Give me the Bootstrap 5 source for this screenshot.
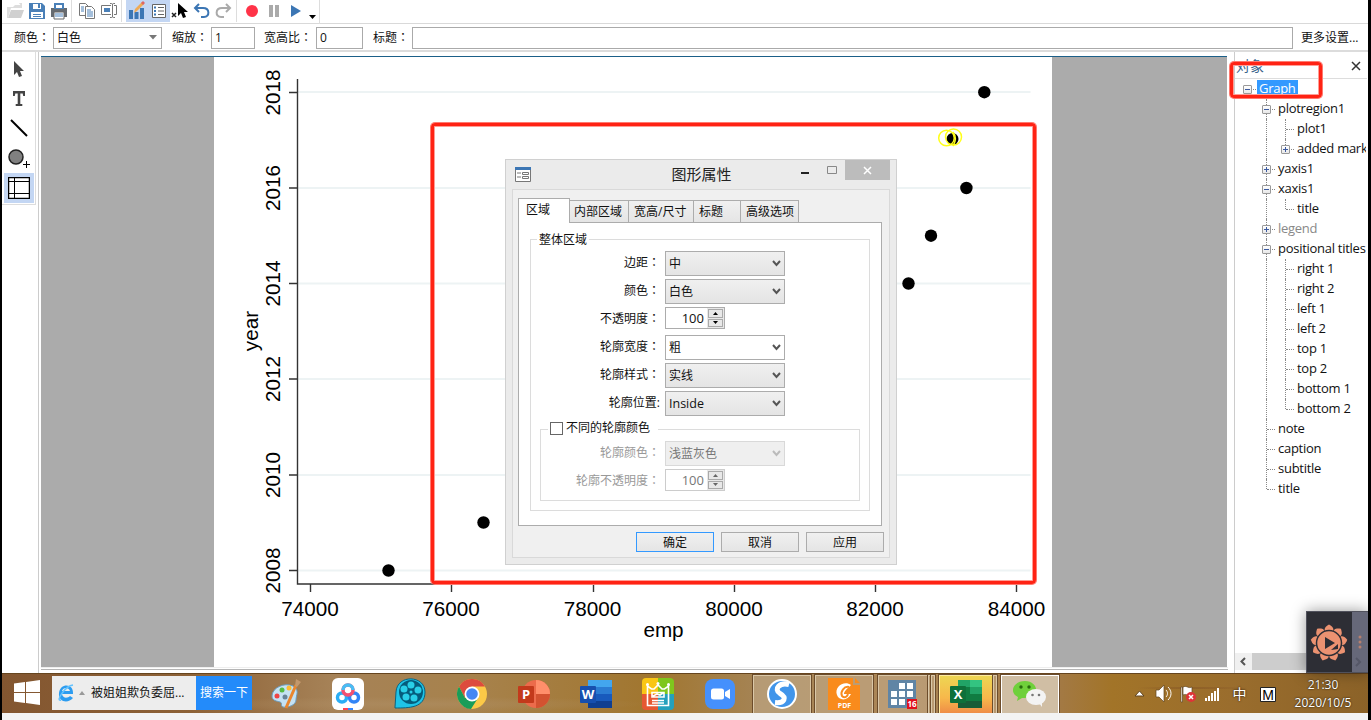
<!DOCTYPE html>
<html lang="zh-CN">
<head>
<meta charset="utf-8">
<title>图形编辑器</title>
<link href="https://cdn.jsdelivr.net/npm/bootstrap@5.3.0/dist/css/bootstrap.min.css" rel="stylesheet">
<style>
body{width:1371px;height:720px;overflow:hidden;background:#fff;color:#111;font:12px/16px "Open Sans","Noto Sans CJK SC",sans-serif}
svg{display:block;flex:none}
.co{font-family:"Noto Sans CJK TC",sans-serif;line-height:1}
.frame{height:720px;border-left:2px solid #000;border-right:3px solid #000}
.bar1{height:24px;padding-left:2px;border-bottom:1px solid #d9d9d9}
.bar1 .tools{height:24px;border-right:1px solid #ddd}
.tb{width:22px;height:22px;display:flex;align-items:center;justify-content:center}
.on{background:#c3d6f3}
.vsep{width:1px;height:22px;background:#ddd}
.bar2{height:28px;border-bottom:2px solid #dcdcdc;padding:1px 10px 0 12px;white-space:nowrap}
.bar2 .inp{height:22px;border:1px solid #aaa;padding:2px 3px;background:#fff}
.main-area{height:621px}
.side{width:34px;height:153px;border-right:1px solid #ddd;border-bottom:1px solid #ddd;padding-top:1px}
.side div{height:30px;width:30px;margin-left:2px;display:flex;align-items:center;justify-content:center}
.work{width:1190px;margin-left:2px;border-left:1px solid #ccc;padding:4px 0 0 2px}
.stage{width:1186px;height:611px;background:#ababab;border-top:1px solid #1b5f88;padding-left:173px}
.workfoot{height:3px;border-top:1px solid #eee;border-bottom:1px solid #b5b5b5}
.objs{width:133px;margin-left:6px;border-left:1px solid #ccc;overflow:hidden}
.objs .hd{height:27px;border-bottom:1px solid #ddd;padding:6px 5px 0 1px;color:#39648c;font-size:14px}
.tree{height:574px;width:131px;overflow:hidden;font-size:13px;padding-left:3px}
.trow{height:20px;display:flex;white-space:nowrap;color:#111}
.g{width:19px;flex:none;position:relative}
.g.v:before,.g.l:before{content:"";position:absolute;left:9px;top:0;height:20px;border-left:1px dotted #888}
.g.l:before{height:10px}
.g.h:after{content:"";position:absolute;left:10px;top:10px;width:8px;border-top:1px dotted #888}
.g b{position:absolute;z-index:1;left:5px;top:6px;width:9px;height:9px;border:1px solid #999;background:linear-gradient(#fff,#e8e8e8);border-radius:1px}
.g b:before{content:"";position:absolute;left:1px;top:3px;width:5px;height:1px;background:#3c5aa0}
.g b.p:after{content:"";position:absolute;left:3px;top:1px;width:1px;height:5px;background:#3c5aa0}
.trow span{padding:0 0 0 2px;letter-spacing:-.27px;line-height:18px}
.trow .sel{background:#3399ff;color:#fff;height:18px;margin-top:1px;line-height:17px;padding-right:2px}
.hs{height:17px;background:#f0f0f0}
.hs .th{width:81px;background:#cdcdcd}
.taskbar{height:40px;background:radial-gradient(ellipse at 410px 30px,#b0906688,#0000 240px),radial-gradient(ellipse at 1190px 14px,#7f4f2399 10px,#0000 60px),linear-gradient(90deg,#835630 0,#8d6237 190px,#a68257 330px,#a7824c 470px,#a1762f 650px,#a58456 760px,#ab8656 880px,#a37a48 1050px,#a27428 1110px,#9a6d2d 1230px,#8b6228 1369px);border-top:1px solid #66451f}
.slot{width:62px;height:40px;display:flex;align-items:center;justify-content:center;flex:none}
.run{width:58px;height:39px;border:1px solid #dac8a8;outline:1px solid #6c4c2b;background:#ffffff30;display:flex;align-items:center;justify-content:center}
.search{width:144px;height:34px;margin:2px 0 0 25px;background:#ededed;white-space:nowrap;line-height:34px}
.go{width:56px;background:#238bfa;color:#fff;text-align:center}
.tray{color:#fff;line-height:18px;text-shadow:0 0 2px #000}
.foot{height:7px;background:#f3f3f3}
.note{position:absolute;border:3px solid #ff2314;border-radius:4px;box-shadow:0 0 0 1px #ff7a70,inset 0 0 0 1px #ff9d95}
.dlg{position:absolute;left:505px;top:159px;width:392px;height:406px;background:#ebebeb;border:1px solid #d0d0d0;padding:0 6px}
.dlg .tt{height:29px;font-size:15px;color:#222}
.dlg .cl{width:45px;height:20px;background:#bcbcbc}
.pan{height:369px;border:1px solid #d9d9d9;background:#f0f0f0;padding:8px 5px 0 5px}
.tabz{height:25px;position:relative;z-index:1;margin-bottom:-1px}
.tabz div{height:23px;border:1px solid #acacac;background:linear-gradient(#f0f0f0,#e5e5e5);padding:3px 0 0 5px;margin-right:-1px;white-space:nowrap}
.tabz .act{height:25px;background:#fff;border-bottom:0;padding:3px 0 0 7px;z-index:1}
.pg{height:304px;width:364px;border:1px solid #acacac;background:#fff;padding:16px 11px}
.fs1{height:272px;border:1px solid #dcdcdc;position:relative}
.cap{position:absolute;background:#fff;line-height:16px;padding:0 2px}
.fr{display:flex;height:28px}
.fr label{width:129px;margin-right:5px;text-align:right;line-height:24px;white-space:pre;color:#111}
.cb{width:120px;height:25px;border:1px solid #acacac;background:linear-gradient(#f0f0f0,#e4e4e4);padding:0 3px 0 3px;line-height:24px;display:flex;justify-content:space-between;align-items:center}
.cb.edit{background:#fff}
.sp{width:60px;height:22px;border:1px solid #acacac;background:#fff;display:flex;justify-content:flex-end;line-height:20px;font-size:13px}
.ud{width:17px;background:#e8e8e8;margin-left:3px;padding:1px;display:flex;flex-direction:column;gap:1px}
.ud i{flex:1;border:1px solid #aaa;display:flex;align-items:center;justify-content:center}
.dim label,.dim .cb,.dim .sp{color:#999}
.dim .fr label{width:119px;color:#999}
.dim .cb{border-color:#d9d9d9;background:#efefef;color:#777}
.dim .sp{border-color:#ccc;color:#777}
.bt{width:78px;height:20px;border:1px solid #acacac;background:linear-gradient(#f0f0f0,#e5e5e5);text-align:center;line-height:19px}
.float{position:absolute;left:1306px;top:611px;width:62px;height:62px;background:#2d2e35;box-shadow:0 0 14px #0006;border:1px solid #50515c}
</style>
<script src="https://cdn.jsdelivr.net/npm/bootstrap@5.3.0/dist/js/bootstrap.bundle.min.js"></script>
</head>
<body>
<div class="frame d-flex flex-column">
  <div class="bar1"><div class="tools d-inline-flex">
    <div class="tb"><svg width="18" height="18"><path d="M1 5h6l2-2h7v3H5L2 16H1zM13 1h3v4" fill="#ddd"/><path d="M5 8h13l-3 8H2z" fill="#d0d0d0"/></svg></div>
    <div class="tb"><svg width="18" height="18"><path d="M1 1h13l3 3v13H1z" fill="#4a80b8"/><path d="M5 2h8v5H5zM3 10h12v6H3z" fill="#fff"/><path d="M10 2h2v4h-2zM5 12h8v1H5zM5 14h8v1H5z" fill="#4a80b8"/></svg></div>
    <div class="tb"><svg width="18" height="18"><path d="M1 6h16v9H1z" fill="#666b70"/><path d="M4 1h10v6H4z" fill="#4a80b8"/><path d="M6 3h6v3H6z" fill="#fff"/><path d="M4 10h10v7H4z" fill="#fff" stroke="#666"/><path d="M5 12h8M5 14h8" stroke="#4a80b8"/></svg></div>
    <div class="vsep" style="margin:0 4px 0 1px"></div>
    <div class="tb"><svg width="18" height="18" fill="#fff" stroke="#777"><path d="M1.500 1.500h6l3 3v9h-9z"/><path d="M7.500 4.500h6l3 3v9h-9z"/><path d="M3 5h3M3 7h3M3 9h3M9 8h4M9 10h6M9 12h6M9 14h6" stroke="#4a80b8"/></svg></div>
    <div class="tb"><svg width="18" height="18" fill="none" stroke="#777"><path d="M11 3.500H1.500v9H11M14 3.500h2.500v9H14M12.500 2v13M10 1.500c2 0 2.500 0 2.500 1 0-1 1-1 2.500-1M10 15.500c2 0 2.500 0 2.500-1 0 1 1 1 2.500 1"/><path d="M4 6h6v4H4z" fill="#4a80b8" stroke="none"/></svg></div>
    <div class="vsep" style="margin:0 4px 0 1px"></div>
    <div class="tb on"><svg width="20" height="20"><path d="M2 9h4v9H2zM7.500 11h4v7h-4zM13 7h4v11h-4z" fill="#3c76b4"/><path d="M7 12l1-4 7-7 2 2-7 7z" fill="#efaa55"/><path d="M14 2l2-2 2 2-2 2z" fill="#d66"/></svg></div>
    <div class="tb on"><svg width="18" height="18" fill="#fff" stroke="#666"><path d="M2.500 2.500h13v13h-13z"/><path d="M4 5.500h2M4 9h2M4 12.500h2" stroke="#3c76b4" stroke-width="2"/><path d="M8 5.500h6M8 9h6M8 12.500h6"/></svg></div>
    <div class="tb" style="width:21px"><svg width="20" height="18"><path d="M1 11l4 4M5 11l-4 4" stroke="#222" stroke-width="1.500"/><path d="M7 1v13l3-3 2 5 3-1-2-5h4z"/></svg></div>
    <div class="tb" style="width:21px"><svg width="18" height="18" fill="none" stroke="#3c76b4" stroke-width="2"><path d="M6 2L2 6l4 4M2 6h8c7 0 7 9 1 9H8"/></svg></div>
    <div class="tb"><svg width="18" height="18" fill="none" stroke="#aaa" stroke-width="2"><path d="M12 2l4 4-4 4M16 6H8C1 6 1 15 7 15h3"/></svg></div>
    <div class="vsep" style="margin:0 4px 0 2px"></div>
    <div class="tb"><svg width="14" height="14"><circle cx="7" cy="7" r="6" fill="#ff3348"/></svg></div>
    <div class="tb"><svg width="12" height="12" fill="#aaa"><path d="M1 0h4v12H1zM7 0h4v12H7z"/></svg></div>
    <div class="tb"><svg width="12" height="12"><path d="M1 0l10 6-10 6z" fill="#3c76b4"/></svg></div>
    <div class="tb" style="width:12px"><svg width="8" height="16"><path d="M0 12h7l-3.500 4z"/></svg></div>
  </div></div>

  <div class="bar2 d-flex align-items-center">
    <span style="width:39px">颜色<span class="co" lang="zh-TW">：</span></span>
    <div class="inp d-flex justify-content-between align-items-center" style="width:109px"><span>白色</span><svg width="9" height="5"><path d="M0 0h8L4 4.500z" fill="#777"/></svg></div>
    <span style="width:39px;margin-left:10px">缩放<span class="co" lang="zh-TW">：</span></span><div class="inp" style="width:44px">1</div>
    <span style="width:52px;margin-left:9px">宽高比<span class="co" lang="zh-TW">：</span></span><div class="inp" style="width:47px">0</div>
    <span style="width:39px;margin-left:10px">标题<span class="co" lang="zh-TW">：</span></span><div class="inp flex-grow-1"></div>
    <span style="margin-left:8px;width:57px">更多设置...</span>
  </div>

  <div class="main-area d-flex">
    <div class="side">
      <div><svg width="16" height="18"><path d="M3 2v14l3-3 2 5 3-1-2-5h4z" fill="#444"/></svg></div>
      <div><svg width="16" height="18"><path d="M2 2h12v5h-1.800l-.5-2.500H9.300V15h2v2H4.700v-2h2V4.500H4.300L3.800 7H2z" fill="#444"/></svg></div>
      <div><svg width="18" height="18"><path d="M1 1l16 16" stroke="#000" stroke-width="2"/></svg></div>
      <div><svg width="26" height="24"><circle cx="10" cy="11" r="7" fill="#808080" stroke="#222" stroke-width="1.500"/><path d="M17 18.500h7M20.500 15v7" stroke="#000"/></svg></div>
      <div class="on"><svg width="22" height="22" fill="#fff" stroke="#000"><path d="M.5.5h21v21H.5z" stroke-width="1.500"/><path d="M6.500 0v22M0 4.500h22M0 16.500h22"/></svg></div>
    </div>
    <div class="work">
      <div class="stage">
        <svg width="838" height="610" viewBox="214 57 838 610" font-family="Liberation Sans" text-anchor="middle">
          <path d="M214 57h838v610H214z" fill="#fff"/>
          <path d="M298 92h732.500M298 188h732.500M298 283.500h732.500M298 379h732.500M298 475h732.500M298 570.500h732.500" stroke="#edf3f4" stroke-width="2"/>
          <path d="M297.500 79v505H1031M289 92.500h8M289 188h8M289 283.500h8M289 379h8M289 475h8M289 570.500h8M310.500 584v8M451.500 584v8M593.500 584v8M734.500 584v8M875.500 584v8M1016.500 584v8" fill="none" stroke="#333" stroke-width="1.400"/>
          <g font-size="20.700">
            <text transform="translate(280 92.500)rotate(-90)">2018</text><text transform="translate(280 188)rotate(-90)">2016</text><text transform="translate(280 283.500)rotate(-90)">2014</text><text transform="translate(280 379)rotate(-90)">2012</text><text transform="translate(280 475)rotate(-90)">2010</text><text transform="translate(280 570.500)rotate(-90)">2008</text>
            <text transform="translate(257.500 331)rotate(-90)">year</text>
            <text x="310" y="616">74000</text><text x="451" y="616">76000</text><text x="592.500" y="616">78000</text><text x="734" y="616">80000</text><text x="875" y="616">82000</text><text x="1016.500" y="616">84000</text><text x="663.500" y="637">emp</text>
          </g>
          <circle cx="388.500" cy="570.500" r="6.200"/><circle cx="483.500" cy="522.500" r="6.200"/><circle cx="908.500" cy="283.500" r="6.200"/><circle cx="931" cy="235.700" r="6.200"/><circle cx="966.400" cy="188" r="6.200"/><circle cx="984.300" cy="92.200" r="6.200"/><circle cx="952.500" cy="139" r="6"/>
          <g fill="none" stroke="#ffff1a" stroke-width="1.500"><circle cx="946.500" cy="138" r="7.800"/><circle cx="953.500" cy="137" r="8"/><path d="M953 132c3 4 3 9 0 14"/></g>
        </svg>
      </div>
      <div class="workfoot"></div>
    </div>
    <div class="objs">
      <div class="hd d-flex justify-content-between"><span>对象</span><svg width="12" height="14"><path d="M2 4l8 8M10 4l-8 8" stroke="#333" stroke-width="1.500"/></svg></div>
      <div class="tree" id="tree"></div>
      <div class="hs d-flex"><svg width="17" height="17"><path d="M10 5L6.500 8.500 10 12" fill="none" stroke="#555" stroke-width="2"/></svg><div class="th"></div></div>
    </div>
  </div>

  <div class="taskbar d-flex">
    <svg width="38" height="38" viewBox="2 674 38 38" fill="#fff"><path d="M14 683.500l11-1.500v10H14zM26 682l14-2v12H26zM14 693h11v10l-11-1.500zM26 693h14v12l-14-2z"/></svg>
    <div class="search d-flex" style="margin-left:12px"><svg width="22" height="34"><path d="M20 19H9c1 5 6 4 8 2l3 2c-5 6-15 4-14-5 1-10 15-10 14 1zM9 16h8c-1-4-7-4-8 0z" transform="translate(1 -1)" fill="#2c9cf0"/><path d="M9 24c-6 2 4-14 12-15" fill="none" stroke="#63c3ff" stroke-width="1.500"/></svg><svg width="17" height="34"><path d="M5 19l3-4 3 4z" fill="#999"/></svg><span>被姐姐欺负委屈...</span></div>
    <div class="search go" style="margin-left:0;width:56px">搜索一下</div>
    <div class="d-flex" style="margin-left:3px">
      <div class="slot"><svg width="32" height="32"><path d="M2 18C2 10 14 4 23 8c7 4 3 9 3 14s-8 8-13 7c-3-1 0-4-3-5s-8-1-8-6z" fill="#c5e2f3" stroke="#6b9cbd"/><circle cx="7" cy="18" r="2.500" fill="#e44"/><circle cx="12" cy="12" r="2.500" fill="#5b4"/><circle cx="19" cy="10" r="2.500" fill="#fb3"/><circle cx="15" cy="19" r="2.500" fill="#68839a"/><path d="M16 30L26 7" stroke="#e9862e" stroke-width="3"/><path d="M25 8l1-7 5 3-4 5z" fill="#c3986c"/></svg></div>
      <div class="slot"><svg width="32" height="32"><rect width="32" height="32" rx="6" fill="#fff"/><g fill="none" stroke-width="3.500"><circle cx="10" cy="19.500" r="4.500" stroke="#2baef5"/><circle cx="22" cy="19.500" r="4.500" stroke="#3285f6"/><circle cx="16" cy="12" r="5" stroke="#f55070"/><path d="M11 12a5 5 0 0 1 10 0" stroke="#48bdf4"/></g><path d="M11 30h5v2h-5z" fill="#f45"/><path d="M16 30h5v2h-5z" fill="#38f"/></svg></div>
      <div class="slot"><svg width="34" height="34"><path d="M2 30l1-15C4-3 32-2 32 15c0 16-16 16-30 16z" fill="#1fc4e8" stroke="#0c6381"/><circle cx="18" cy="15" r="12" fill="#055c7c"/><g fill="#29cfe8"><circle cx="18" cy="8" r="3.500"/><circle cx="11" cy="12" r="3.500"/><circle cx="13" cy="20" r="3.500"/><circle cx="21" cy="21" r="3.500"/><circle cx="25" cy="13" r="3.500"/><circle cx="18" cy="15" r="1.500"/></g></svg></div>
      <div class="slot"><svg width="30" height="30"><circle cx="15" cy="15" r="15" fill="#fcc947"/><path d="M2 7.500A15 15 0 0 1 28 7.500H15L8 19z" fill="#dd4b3e"/><path d="M2 7.500A15 15 0 0 0 14 30l7-11H8z" fill="#199d59"/><circle cx="15" cy="15" r="7.500" fill="#fff"/><circle cx="15" cy="15" r="5.800" fill="#4587f3"/></svg></div>
      <div class="slot"><svg width="32" height="30"><circle cx="18" cy="15" r="14" fill="#ec6b4b"/><path d="M18 1a14 14 0 0 1 14 14H18z" fill="#ff8f6b"/><path d="M18 29a14 14 0 0 0 14-14H18z" fill="#d35230"/><rect y="7" width="16" height="17" rx="1" fill="#c33a1b"/><text x="8" y="20" text-anchor="middle" fill="#fff" font-family="Open Sans" font-size="13" font-weight="700">P</text></svg></div>
      <div class="slot"><svg width="32" height="30"><path d="M8 1h24v7H8z" fill="#43a6ee"/><path d="M8 8h24v7H8z" fill="#2b7cd3"/><path d="M8 15h24v7H8z" fill="#185abd"/><path d="M8 22h24v7H8z" fill="#103f91"/><rect y="7" width="16" height="17" rx="1" fill="#174fae"/><text x="8" y="20" text-anchor="middle" fill="#fff" font-family="Open Sans" font-size="13" font-weight="700">W</text></svg></div>
      <div class="slot"><svg width="32" height="32"><clipPath id="gm"><rect width="32" height="32" rx="4"/></clipPath><g clip-path="url(#gm)"><path d="M0 0h16v16H0z" fill="#f9c616"/><path d="M16 0h16v16H16z" fill="#7fc71d"/><path d="M0 16h16v16H0z" fill="#e65832"/><path d="M16 16h16v16H16z" fill="#25a0bd"/></g><g fill="none" stroke="#fff" stroke-width="1.600"><path d="M5.500 8v19.500h21V8l-4 3h-2.500L16 7l-4 4H9.500z"/><path d="M10 14.500h12v4.500H10zM11 18l4-2 3 1 3-2M10 22.500h12M10 25h12"/></g><g fill="#fff"><circle cx="5.500" cy="6.500" r="1.500"/><circle cx="16" cy="5.500" r="1.500"/><circle cx="26.500" cy="6.500" r="1.500"/></g></svg></div>
      <div class="slot"><svg width="30" height="30"><rect width="30" height="30" rx="8" fill="#4590fc"/><rect x="6" y="9.500" width="13" height="11" rx="2.500" fill="#fff"/><path d="M20 13l5-3v10l-5-3z" fill="#fff"/></svg></div>
      <div class="slot"><div class="run"><svg width="30" height="30"><circle cx="15" cy="15" r="14" fill="#4195ea" stroke="#fff" stroke-width="2"/><path d="M22 5.500C13 3 6 10 13 14.500c7 4 5 10-5 9" fill="none" stroke="#fff" stroke-width="5"/></svg></div></div>
      <div class="slot"><div class="run"><svg width="32" height="32"><path d="M0 0h25v7h7v25H0z" fill="#f98b1c"/><path d="M27 0l5 5h-5z" fill="#f98b1c"/><path d="M23 7C16 2 6 9 9 17c2 6 11 6 14-1h-7c0-3 3-5 7-9z" fill="#fff"/><path d="M21 9c-5-1-9 5-7 9 3 3 6 0 6-3" fill="none" stroke="#f98b1c" stroke-width="2"/><text x="16.500" y="30" text-anchor="middle" fill="#fff" font-family="Open Sans" font-size="7" font-weight="700">PDF</text></svg></div></div>
      <div class="slot"><div class="run" style="width:50px"><svg width="29" height="29"><path d="M0 0h28v28H0z" fill="#6085a5"/><path d="M11 3h6v6h-6zM19 3h6v6h-6zM3 11h6v6H3zM11 11h6v6h-6zM19 11h6v6h-6zM3 19h6v6H3zM11 19h6v6h-6z" fill="#fff"/><path d="M19 19h10v10H19z" fill="#e1101c"/><text x="24" y="27" text-anchor="middle" fill="#fff" font-family="Open Sans" font-size="8" font-weight="700">16</text></svg></div><div class="run" style="width:3px"></div><div class="run" style="width:4px"></div></div>
      <div class="slot"><div class="run" style="width:54px;background:linear-gradient(#eed653,#f7b74b 60%,#ef8d47);border-color:#ffeaa0"><svg width="32" height="30"><path d="M8 1h24v28H8z" fill="#21a366"/><path d="M20 1h12v7H20z" fill="#33c481"/><path d="M8 8h12v14H8z" fill="#107c41"/><path d="M8 22h24v7H8z" fill="#185c37"/><path d="M20 15h12v7H20z" fill="#107c41"/><rect y="7" width="16" height="17" rx="1" fill="#0e703a"/><text x="8" y="20" text-anchor="middle" fill="#fff" font-family="Open Sans" font-size="13" font-weight="700">X</text></svg></div><div class="run" style="width:4px"></div></div>
      <div class="slot"><div class="run" style="background:#d0bea4;border-color:#fff"><svg width="34" height="28"><path d="M4 21l1-4C-5 12 1 1 12 1c8 0 12 6 11 10-2 6-8 7-14 7z" fill="#6fd03b"/><circle cx="8" cy="7" r="1.700" fill="#286c0d"/><circle cx="16" cy="7" r="1.700" fill="#286c0d"/><ellipse cx="23" cy="17" rx="10" ry="8" fill="#f3f3f3"/><path d="M26 23l3 4v-5z" fill="#f3f3f3"/><circle cx="19.500" cy="15" r="1.300" fill="#777"/><circle cx="26" cy="15" r="1.300" fill="#777"/></svg></div></div>
    </div>
    <div class="tray d-flex align-items-center ms-auto">
      <svg width="158" height="39" viewBox="1128 674 158 39" style="margin-right:5px"><path d="M1134 696l4.500-5 4.500 5z" fill="#fff" stroke="#604521"/><g fill="#fff" stroke="#604521" stroke-width=".7"><path d="M1155 690h3l5-5v17l-5-5h-3z"/><path d="M1180 687h1.500v15h-1.500zM1182 687c4-2 5 2 9 0v8c-4 2-5-2-9 0z"/></g><path d="M1204 698h2v3h-2zM1207 696h2v5h-2zM1210 693h2v8h-2zM1213 691h2v10h-2zM1216 688h2v13h-2z" fill="#fff"/><path d="M1165 690c2 2 2 5 0 7M1167 687c4 4 4 9 0 13" fill="none" stroke="#fff"/><circle cx="1190" cy="697" r="5" fill="#df3438"/><path d="M1188 695l4 4M1192 695l-4 4" stroke="#fff" stroke-width="1.500"/><text x="1231.500" y="699" fill="#fff" font-size="14" font-family="Noto Sans CJK SC">中</text><path d="M1259.500 687.500h15v14h-15z" fill="#fff" stroke="#222"/><text x="1267" y="700" text-anchor="middle" font-size="14" font-family="Liberation Sans" style="text-shadow:none">M</text></svg>
      <div class="text-center" style="width:62px;margin-right:14px">21:30<br>2020/10/5</div>
    </div>
  </div>
  <div class="foot"></div>
</div>

<div class="note" style="left:431px;top:123px;width:605px;height:461px"></div>
<div class="note" style="left:1230px;top:62px;width:92px;height:36px"></div>

<div class="dlg">
  <div class="tt d-flex">
    <svg width="20" height="29"><path d="M3.500 7.500h15v14h-15z" fill="#fff" stroke="#777"/><path d="M3 7h16v3H3z" fill="#3c76b4"/><path d="M5 13h4M5 17h4M10.500 12.500h6v2h-6zM10.500 16.500h6v2h-6z" fill="none" stroke="#777"/></svg>
    <div class="flex-grow-1 text-center" style="padding:6px 0 0 84px">图形属性</div>
    <svg width="58" height="20"><path d="M14 12h8v2h-8z" fill="#222"/><path d="M40.500 6.500h9v7h-9z" fill="none" stroke="#888"/></svg>
    <div class="cl"><svg width="45" height="20"><path d="M19 7l7 7M26 7l-7 7" stroke="#fff" stroke-width="1.500"/></svg></div>
  </div>
  <div class="pan">
    <div class="tabz d-flex align-items-end">
      <div class="act" style="width:52px">区域</div><div style="width:60px;padding-left:4px">内部区域</div><div style="width:66px">宽高/尺寸</div><div style="width:48px">标题</div><div style="width:59px">高级选项</div>
    </div>
    <div class="pg"><div class="fs1" style="padding-top:11px">
      <span class="cap" style="left:6px;top:-8px">整体区域</span>
      <div class="fr"><label>边距<span class="co" lang="zh-TW">：</span></label><div class="cb">中<svg width="9" height="7"><path d="M1 1l3.500 4L8 1" fill="none" stroke="#555" stroke-width="2"/></svg></div></div>
      <div class="fr"><label>颜色<span class="co" lang="zh-TW">：</span></label><div class="cb">白色<svg width="9" height="7"><path d="M1 1l3.500 4L8 1" fill="none" stroke="#555" stroke-width="2"/></svg></div></div>
      <div class="fr"><label>不透明度<span class="co" lang="zh-TW">：</span></label><div class="sp">100<div class="ud"><i><svg width="5" height="3"><path d="M0 3h5L2.500 0z"/></svg></i><i><svg width="5" height="3"><path d="M0 0h5L2.500 3z"/></svg></i></div></div></div>
      <div class="fr"><label>轮廓宽度<span class="co" lang="zh-TW">：</span></label><div class="cb edit">粗<svg width="9" height="7"><path d="M1 1l3.500 4L8 1" fill="none" stroke="#555" stroke-width="2"/></svg></div></div>
      <div class="fr"><label>轮廓样式<span class="co" lang="zh-TW">：</span></label><div class="cb">实线<svg width="9" height="7"><path d="M1 1l3.500 4L8 1" fill="none" stroke="#555" stroke-width="2"/></svg></div></div>
      <div class="fr"><label>轮廓位置:</label><div class="cb"><span style="font-size:12.500px">Inside</span><svg width="9" height="7"><path d="M1 1l3.500 4L8 1" fill="none" stroke="#555" stroke-width="2"/></svg></div></div>
      <div class="dim position-relative" style="height:72px;border:1px solid #dcdcdc;margin:10px 9px 0;padding-top:11px">
        <span class="cap d-flex align-items-center text-nowrap" style="left:7px;top:-10px;width:110px"><i style="width:13px;height:13px;border:1px solid #666;margin-right:3px"></i>不同的轮廓颜色</span>
        <div class="fr"><label>轮廓颜色<span class="co" lang="zh-TW">：</span></label><div class="cb">浅蓝灰色<svg width="9" height="7"><path d="M1 1l3.500 4L8 1" fill="none" stroke="#bbb" stroke-width="2"/></svg></div></div>
        <div class="fr"><label>轮廓不透明度<span class="co" lang="zh-TW">：</span></label><div class="sp">100<div class="ud"><i><svg width="5" height="3"><path d="M0 3h5L2.500 0z" fill="#666"/></svg></i><i><svg width="5" height="3"><path d="M0 0h5L2.500 3z" fill="#666"/></svg></i></div></div></div>
      </div>
    </div></div>
    <div class="d-flex justify-content-end" style="gap:7px;margin:6px 0 0"><div class="bt" style="border-color:#3399ff">确定</div><div class="bt">取消</div><div class="bt">应用</div></div>
  </div>
</div>

<div class="float d-flex"><svg width="45" height="60"><g fill="#eb9271" id="petals"></g><circle cx="22" cy="31" r="12.500" fill="#eb9271" stroke="#2d2e35" stroke-width="1.500"/><path d="M18 25l10 6-10 6zM31 32v5l-7 1z" fill="#2d2e35"/></svg><svg width="16" height="60" style="background:#666879"><g fill="#b77f6d"><circle cx="8" cy="25" r="1.500"/><circle cx="8" cy="30" r="1.500"/><circle cx="8" cy="35" r="1.500"/></g><path d="M4 46l4 4-4 4" fill="none" stroke="#555767" stroke-width="2"/></svg></div>

<script>
// Each row: guide cells (v = line through, l = line ends here, h = branch), expander, label
const rows=[['','-','Graph'],['vh','-','plotregion1'],['v,vh','','plot1'],['v,lh','+','added mark'],['vh','+','yaxis1'],['vh','-','xaxis1'],['v,lh','','title'],['vh','+','legend'],['vh','-','positional titles'],
['v,vh','','right 1'],['v,vh','','right 2'],['v,vh','','left 1'],['v,vh','','left 2'],['v,vh','','top 1'],['v,vh','','top 2'],['v,vh','','bottom 1'],['v,lh','','bottom 2'],['vh','','note'],['vh','','caption'],['vh','','subtitle'],['lh','','title']];
document.getElementById('tree').innerHTML=rows.map(([g,e,t])=>{
  const cells=g?g.split(','):['h'];
  return '<div class="trow"'+(g?' style="padding-left:19px"':'')+'>'+cells.map((c,i)=>'<div class="g '+c.split('').join(' ')+'">'+(e&&i==cells.length-1?'<b class="'+(e=='+'?'p':'')+'"></b>':'')+'</div>').join('')+'<span class="'+(t=='Graph'?'sel':'')+'"'+(t=='legend'?' style="color:#888"':'')+'>'+t+'</span></div>'}).join('');
// Nine petals around the disc
document.getElementById('petals').innerHTML=[...Array(9)].map((_,i)=>'<path d="M22 12.500c5 3 5 5 3.500 8h-7c-1.500-3-1.500-5 3.500-8z" transform="rotate('+i*40+' 22 31)"/>').join('');
</script>
</body>
</html>
